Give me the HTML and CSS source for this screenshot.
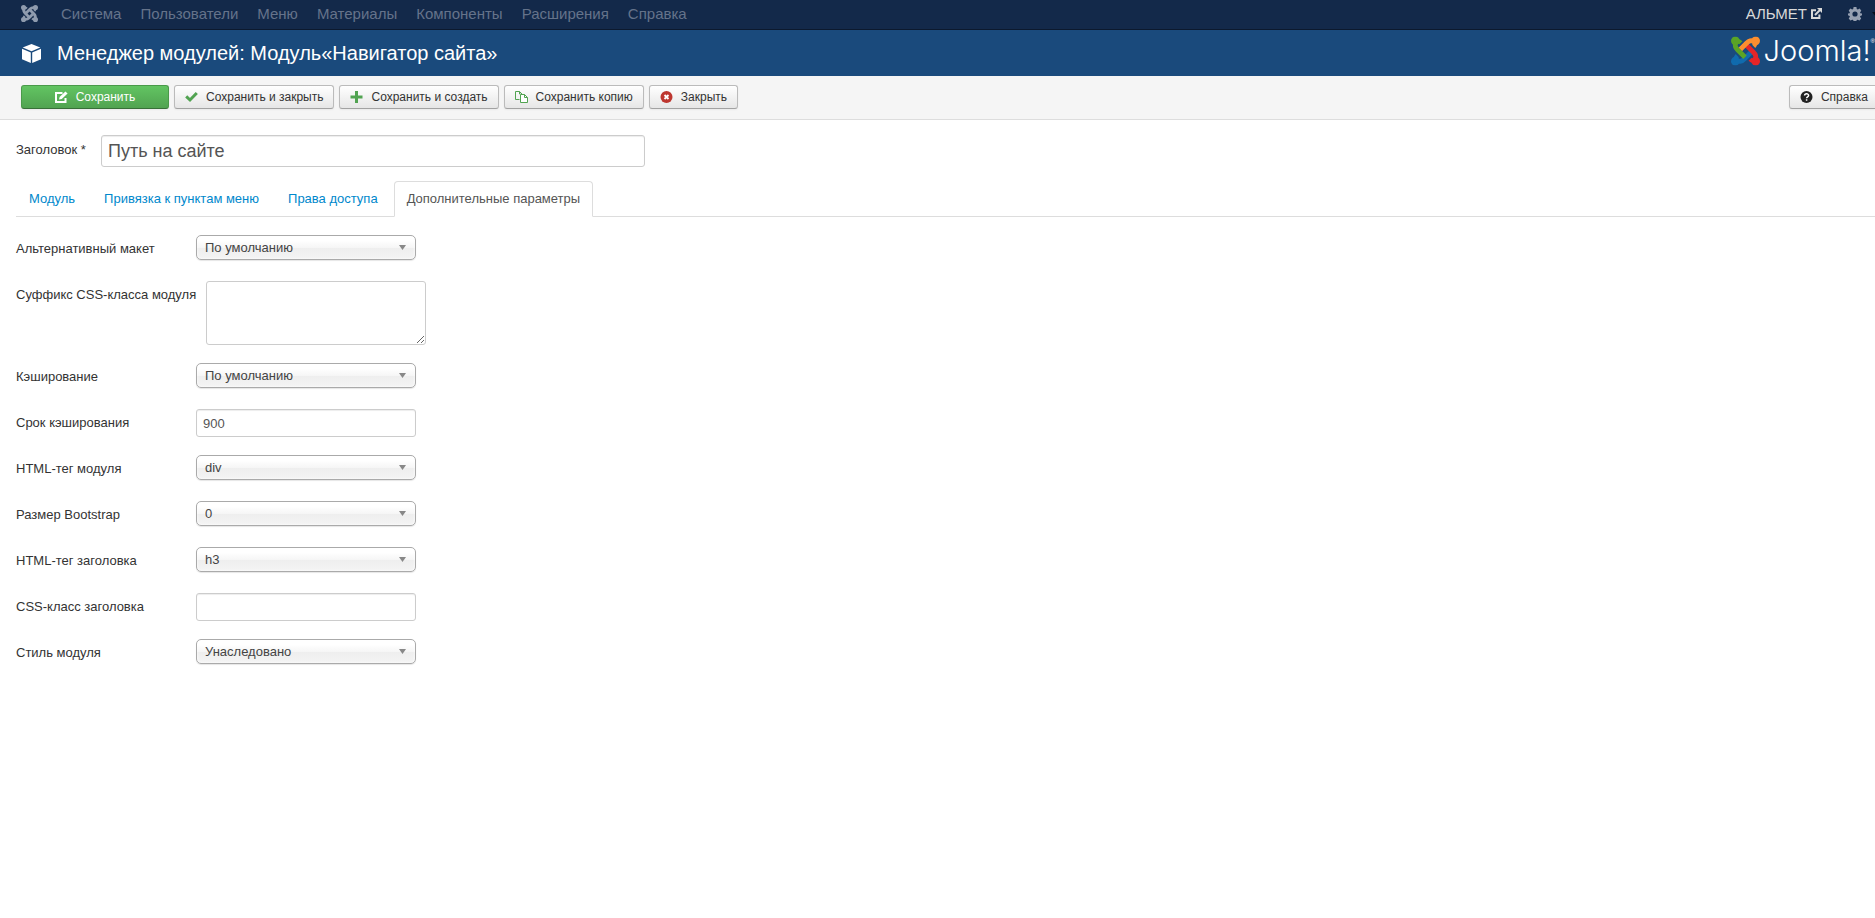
FILE: index.html
```html
<!DOCTYPE html>
<html lang="ru">
<head>
    <meta charset="UTF-8">
    <meta name="viewport" content="width=device-width, initial-scale=1.0">
    <title>Менеджер модулей</title>
    <link rel="stylesheet" href="styles.css">
</head>
<body>

<!-- Shared logo shapes -->
<svg class="defs" width="0" height="0" aria-hidden="true">
    <symbol id="logoArm" viewBox="0 0 24 24">
        <circle cx="3.6" cy="3.6" r="3.6" stroke="none"/>
        <path d="M4 4C3 7.800 3.400 9 5.600 11.200L11.600 17.200" fill="none" stroke-width="4"/>
        <path d="M4 4Q6.600 3.600 8.200 5.200" fill="none" stroke-width="3.600"/>
    </symbol>
</svg>

<!-- Top Menu -->
<nav class="navbar">
    <a class="brand" href="#" aria-label="Joomla">
        <svg width="17" height="17" viewBox="0 0 24 24" fill="#8f9bae" stroke="#8f9bae">
            <use href="#logoArm"/>
            <use href="#logoArm" transform="rotate(90 12 12)"/>
            <use href="#logoArm" transform="rotate(180 12 12)"/>
            <use href="#logoArm" transform="rotate(270 12 12)"/>
        </svg>
    </a>
    <ul class="menu">
        <li><a href="#">Система</a></li>
        <li><a href="#">Пользователи</a></li>
        <li><a href="#">Меню</a></li>
        <li><a href="#">Материалы</a></li>
        <li><a href="#">Компоненты</a></li>
        <li><a href="#">Расширения</a></li>
        <li><a href="#">Справка</a></li>
    </ul>
    <div class="nav-right">
        <a class="site-link" href="#">АЛЬМЕТ
            <svg width="11" height="11" viewBox="0 0 11 11" fill="none" stroke="#d9d9d9" stroke-width="2">
                <path d="M5 2.200H1V10h7.400V6.400"/>
                <path d="M4 7L9 2"/>
                <path d="M6 0h5v5z" fill="#d9d9d9" stroke="none"/>
            </svg>
        </a>
        <a class="user-link" href="#" aria-label="Настройки">
            <svg width="14" height="14" viewBox="0 0 14 14">
                <path fill="#96a0b1" fill-rule="evenodd" d="M5.6 0h2.8l.4 1.9 1 .5 1.9-.8 1.6 2.2L12.1 5.300l.2.9 1.700.4v1.700l-1.700.6-.3.9 1.200 1.600-1.700 2.100-1.900-.8-.9.4-.4 1.400H5.600l-.4-1.400-.9-.4-1.900.8L.7 11.400l1.200-1.600-.3-.9L0 8.300V6.600l1.700-.4.2-.9L.7 3.800l1.600-2.200 1.900.8 1-.5zM7 4.400a2.600 2.600 0 1 0 0 5.200 2.600 2.600 0 0 0 0-5.200z"/>
            </svg>
        </a>
        <svg class="caret" width="3" height="4" viewBox="0 0 3 4"><path d="M0 0h3v3.500z" fill="#050d1c"/></svg>
    </div>
</nav>

<!-- Page Header -->
<header class="header">
    <svg class="cube" width="19" height="19" viewBox="0 0 19 19" fill="#fff">
        <path d="M9.500 0L18.300 3.600 9.500 7.200.7 3.600z"/>
        <path d="M0 4.800L8.800 8.400V19L0 15.200z"/>
        <path d="M19 4.800L10.200 8.400V19l8.800-3.800z"/>
    </svg>
    <h1 class="page-title">Менеджер модулей: Модуль«Навигатор сайта»</h1>
    <div class="logo">
        <svg width="29" height="30" viewBox="0 0 24 24">
            <use href="#logoArm" transform="rotate(270 12 12)" fill="#106bae" stroke="#106bae"/>
            <use href="#logoArm" transform="rotate(180 12 12)" fill="#e52528" stroke="#e52528"/>
            <use href="#logoArm" transform="rotate(90 12 12)" fill="#fd8f2f" stroke="#fd8f2f"/>
            <use href="#logoArm" fill="#5aa426" stroke="#5aa426"/>
        </svg>
        <span class="logo-text">Joomla!</span><span class="logo-mark">®</span>
    </div>
</header>

<!-- Toolbar -->
<div class="toolbar">
    <button type="button" class="btn btn-success">
        <svg width="13" height="12" viewBox="0 0 13 12" fill="none" stroke="#fff" stroke-width="2">
            <path d="M7.500 2H1v9h9.500V7"/>
            <path d="M4 8.600l.6-2.600L10.400.4 12.600 2.400 6.800 8z" fill="#fff" stroke="none"/>
        </svg>
        Сохранить
    </button>
    <button type="button" class="btn">
        <svg width="13" height="12" viewBox="0 0 13 12"><path d="M1.200 5.400L5 9l6.800-7" fill="none" stroke="#51a351" stroke-width="3"/></svg>
        Сохранить и закрыть
    </button>
    <button type="button" class="btn">
        <svg width="13" height="12" viewBox="0 0 13 12"><path d="M6.500 0v12M.5 6h12" stroke="#51a351" stroke-width="3"/></svg>
        Сохранить и создать
    </button>
    <button type="button" class="btn">
        <svg width="13" height="12" viewBox="0 0 13 12" fill="none" stroke="#51a351">
            <path d="M4.500 8.500h-4v-8h4l2.500 2.500"/>
            <path d="M4.500.5v2.500h1"/>
            <path d="M5.500 3.500h4l3 3v5h-7z" fill="#fff"/>
            <path d="M9.500 3.500v3h3"/>
        </svg>
        Сохранить копию
    </button>
    <button type="button" class="btn">
        <svg width="13" height="12" viewBox="0 0 13 12"><circle cx="6.500" cy="6" r="6" fill="#bd362f"/><path d="M4.500 4l4 4M8.500 4l-4 4" stroke="#fff" stroke-width="1.800"/></svg>
        Закрыть
    </button>
    <button type="button" class="btn btn-help">
        <svg width="13" height="12" viewBox="0 0 13 12"><circle cx="6.500" cy="6" r="6" fill="#222"/><path d="M4.600 4.600C4.600 2.300 8.600 2.300 8.600 4.500 8.600 5.900 6.600 5.700 6.600 7.200M6.600 8.200v1.500" fill="none" stroke="#fff" stroke-width="1.500"/></svg>
        Справка
    </button>
</div>

<!-- Module Form -->
<form class="content">
    <div class="title-row">
        <label for="moduleTitle">Заголовок *</label>
        <input type="text" id="moduleTitle" class="title-input" value="Путь на сайте">
    </div>

    <ul class="tabs">
        <li><a href="#">Модуль</a></li>
        <li><a href="#">Привязка к пунктам меню</a></li>
        <li><a href="#">Права доступа</a></li>
        <li><a href="#" class="active">Дополнительные параметры</a></li>
    </ul>

    <div class="row">
        <label for="layout">Альтернативный макет</label>
        <select id="layout"><option>По умолчанию</option></select>
    </div>
    <div class="row">
        <label for="suffix" class="label-wide">Суффикс CSS-класса модуля</label>
        <textarea id="suffix"></textarea>
    </div>
    <div class="row">
        <label for="caching">Кэширование</label>
        <select id="caching"><option>По умолчанию</option></select>
    </div>
    <div class="row">
        <label for="cacheTime">Срок кэширования</label>
        <input type="text" id="cacheTime" value="900">
    </div>
    <div class="row">
        <label for="moduleTag">HTML-тег модуля</label>
        <select id="moduleTag"><option>div</option></select>
    </div>
    <div class="row">
        <label for="bootstrapSize">Размер Bootstrap</label>
        <select id="bootstrapSize"><option>0</option></select>
    </div>
    <div class="row">
        <label for="headerTag">HTML-тег заголовка</label>
        <select id="headerTag"><option>h3</option></select>
    </div>
    <div class="row">
        <label for="headerClass">CSS-класс заголовка</label>
        <input type="text" id="headerClass">
    </div>
    <div class="row">
        <label for="moduleStyle">Стиль модуля</label>
        <select id="moduleStyle"><option>Унаследовано</option></select>
    </div>
</form>

</body>
</html>
```
FILE: styles.css
```css
* {
    box-sizing: border-box;
}

body {
    margin: 0;
    font-family: "Liberation Sans", Arial, sans-serif;
    font-size: 13px;
    line-height: 18px;
    color: #333;
    background: #fff;
    overflow-x: hidden;
}

a {
    color: #08c;
    text-decoration: none;
}

ul {
    list-style: none;
    margin: 0;
    padding: 0;
}

.defs {
    position: absolute;
}

/* Top Menu */
.navbar {
    display: flex;
    align-items: center;
    height: 30px;
    padding-left: 21px;
    padding-bottom: 2px;
    background: #13294a;
    border-bottom: 1px solid #0c192e;
    font-size: 15px;
}

.brand {
    display: flex;
    width: 40px;
}

.menu {
    display: flex;
    gap: 19px;
}

.menu a {
    color: #65738a;
}

.nav-right {
    display: flex;
    align-items: center;
    margin-left: auto;
}

.nav-right svg {
    display: block;
}

.site-link {
    display: flex;
    align-items: center;
    gap: 4px;
    margin-right: 26px;
    color: #d9d9d9;
}

.user-link {
    margin-right: 10px;
}

/* Page Header */
.header {
    display: flex;
    align-items: center;
    height: 46px;
    padding-left: 22px;
    background: #1a4a7c;
    color: #fff;
}

.cube {
    margin-right: 16px;
}

.page-title {
    margin: 0;
    font-size: 20px;
    font-weight: 400;
    line-height: 30px;
}

.logo {
    display: flex;
    align-items: center;
    margin-left: auto;
}

.logo svg {
    margin-right: 4px;
    margin-bottom: 4px;
}

.logo-text {
    padding-bottom: 4px;
    font-family: Inter, sans-serif;
    font-size: 29px;
    font-weight: 300;
    line-height: 30px;
}

.logo-mark {
    align-self: flex-start;
    font-size: 6px;
    line-height: 10px;
}

/* Toolbar */
.toolbar {
    display: flex;
    gap: 5px;
    padding: 9px 0 10px 21px;
    background: #f5f5f5;
    border-bottom: 1px solid #ddd;
}

.btn {
    display: flex;
    align-items: center;
    justify-content: center;
    gap: 8px;
    height: 24px;
    padding: 0 10px;
    border: 1px solid #bbb;
    border-bottom-color: #a2a2a2;
    border-radius: 3px;
    background: linear-gradient(#fff, #e6e6e6);
    box-shadow: 0 1px 2px rgba(0, 0, 0, 0.05);
    color: #333;
    font-family: inherit;
    font-size: 12px;
    cursor: pointer;
}

.btn-success {
    width: 148px;
    border-color: #4a9a4a #4a9a4a #387038;
    background: linear-gradient(#62c462, #51a351);
    color: #fff;
}

.btn-help {
    margin-left: auto;
    padding-right: 7px;
    border-right: 0;
    border-radius: 3px 0 0 3px;
}

/* Module Form */
.content {
    padding: 15px 0 0 16px;
}

.title-row {
    display: flex;
    margin-bottom: 14px;
}

.title-row label {
    width: 85px;
    padding-top: 6px;
}

input,
textarea,
select {
    width: 220px;
    margin: 0;
    border: 1px solid #ccc;
    border-radius: 3px;
    background: #fff;
    color: #555;
    font-family: inherit;
    font-size: 13px;
}

input {
    height: 28px;
    padding: 4px 6px;
    box-shadow: inset 0 1px 1px rgba(0, 0, 0, 0.075);
}

textarea {
    height: 64px;
    padding: 4px 6px;
    resize: both;
}

select {
    appearance: none;
    height: 25px;
    padding: 0 8px;
    border-color: #aaa;
    border-radius: 5px;
    background:
        url("data:image/svg+xml,%3Csvg xmlns='http://www.w3.org/2000/svg' width='7' height='5'%3E%3Cpath d='M0 0h7L3.5 5z' fill='%23888'/%3E%3C/svg%3E") no-repeat right 9px center,
        linear-gradient(#fff 20%, #f6f6f6 50%, #eee 52%, #f4f4f4 100%);
    box-shadow: inset 0 0 3px #fff, 0 1px 1px rgba(0, 0, 0, 0.1);
    color: #444;
}

.title-input {
    width: 544px;
    height: 32px;
    font-size: 18px;
}

/* Tabs */
.tabs {
    display: flex;
    margin-bottom: 18px;
    border-bottom: 1px solid #ddd;
}

.tabs a {
    display: block;
    margin: 0 3px -1px 0;
    padding: 8px 12px;
    border: 1px solid transparent;
    border-radius: 4px 4px 0 0;
}

.tabs .active {
    background: #fff;
    border-color: #ddd;
    border-bottom-color: #fff;
    color: #555;
}

/* Option Rows */
.row {
    display: flex;
    align-items: flex-start;
    min-height: 28px;
    margin-bottom: 18px;
}

.row label {
    width: 180px;
    padding-top: 5px;
}

.row .label-wide {
    width: 190px;
}
```
